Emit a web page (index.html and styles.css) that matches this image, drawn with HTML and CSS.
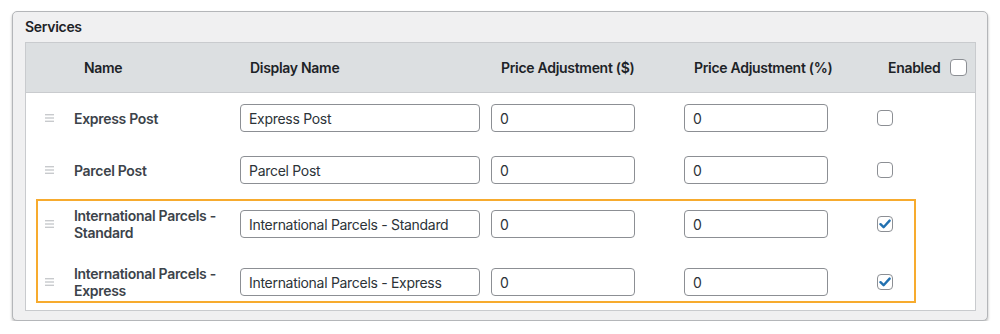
FILE: index.html
```html
<!DOCTYPE html>
<html>

<head>
<link rel="stylesheet" href="styles.css">
</head>

<body>
<div class="panel">

<div class="title">Services</div>

<div class="services">

<div class="row head">
<div></div>
<div class="th">Name</div>
<div class="th">Display Name</div>
<div class="th">Price Adjustment ($)</div>
<div class="th">Price Adjustment (%)</div>
<div class="th enabled">Enabled <span class="check big"></span></div>
</div>

<div class="tbody">

<div class="row">
<span class="handle"><svg width="9" height="8" viewBox="0 0 9 8"><rect y="0" width="9" height="1.4"/><rect y="3.3" width="9" height="1.4"/><rect y="6.6" width="9" height="1.4"/></svg></span>
<div class="name">Express Post</div>
<input class="text wide" value="Express Post">
<input class="text" value="0">
<input class="text" value="0">
<span class="check"></span>
</div>

<div class="row">
<span class="handle"><svg width="9" height="8" viewBox="0 0 9 8"><rect y="0" width="9" height="1.4"/><rect y="3.3" width="9" height="1.4"/><rect y="6.6" width="9" height="1.4"/></svg></span>
<div class="name">Parcel Post</div>
<input class="text wide" value="Parcel Post">
<input class="text" value="0">
<input class="text" value="0">
<span class="check"></span>
</div>

<div class="highlight">

<div class="row">
<span class="handle"><svg width="9" height="8" viewBox="0 0 9 8"><rect y="0" width="9" height="1.4"/><rect y="3.3" width="9" height="1.4"/><rect y="6.6" width="9" height="1.4"/></svg></span>
<div class="name">International Parcels - Standard</div>
<input class="text wide" value="International Parcels - Standard">
<input class="text" value="0">
<input class="text" value="0">
<span class="check on"><svg width="12" height="10" viewBox="0 0 12 10"><path d="M1.5 5.2 L4.6 8.2 L10.6 1.6" fill="none" stroke="#2271b1" stroke-width="2.4" stroke-linecap="round" stroke-linejoin="round"/></svg></span>
</div>

<div class="row">
<span class="handle"><svg width="9" height="8" viewBox="0 0 9 8"><rect y="0" width="9" height="1.4"/><rect y="3.3" width="9" height="1.4"/><rect y="6.6" width="9" height="1.4"/></svg></span>
<div class="name">International Parcels - Express</div>
<input class="text wide" value="International Parcels - Express">
<input class="text" value="0">
<input class="text" value="0">
<span class="check on"><svg width="12" height="10" viewBox="0 0 12 10"><path d="M1.5 5.2 L4.6 8.2 L10.6 1.6" fill="none" stroke="#2271b1" stroke-width="2.4" stroke-linecap="round" stroke-linejoin="round"/></svg></span>
</div>

</div>

</div>

</div>

</div>
</body>
</html>
```

FILE: styles.css
```css
body {
    margin: 0;
    background: #fff;
    font-family: Inter, "Noto Sans", sans-serif;
    font-size: 14px;
    letter-spacing: -0.3px;
    color: #3c434a;
}

.panel {
    box-sizing: border-box;
    width: 976px;
    margin: 11px 0 0 12px;
    padding: 0 11px 9px 12px;

    background: #f0f0f1;
    border: 1px solid #b4b6b9;
    border-radius: 5px;
    box-shadow: 0 2px 3px rgba(0, 0, 0, 0.28);
}

.title {
    padding: 5px 0;
    line-height: 20px;
    font-weight: 600;
    color: #1d2327;
}

.services {
    border: 1px solid #c9cbce;
    background: #fff;
}

.row {
    display: grid;
    grid-template-columns: 36px 166px 251px 193px 193px 1fr;
    grid-template-rows: 28px;
    align-items: center;
    height: 28px;
    padding-left: 12px;
}

.head {
    grid-template-rows: 48px;
    height: 48px;
    padding-bottom: 1px;
    background: #dcdfe1;
    border-bottom: 1px solid #c9cbce;
}

.th {
    padding-left: 10px;
    font-weight: 600;
    color: #1d2327;
}

.enabled {
    display: flex;
    align-items: center;
    gap: 10px;
    padding-left: 11px;
}

.tbody {
    padding: 11px 0 7px;
}

.tbody > .row + .row {
    margin-top: 24px;
}

.highlight {
    width: 880px;
    box-sizing: border-box;
    margin: 15px 0 0 10px;
    padding: 9px 0 5px;
    border: 2px solid #f7ab2e;
}

.highlight .row {
    padding-left: 0;
}

.highlight .row + .row {
    margin-top: 30px;
}

.handle {
    margin-left: 7px;
    fill: #c8cacd;
    line-height: 0;
}

.name {
    font-weight: 600;
    line-height: 17px;
    padding-right: 14px;
}

.text {
    box-sizing: border-box;
    width: 144px;
    height: 28px;
    padding: 0 8px;

    font-family: Inter, "Noto Sans", sans-serif;
    font-size: 14px;
    letter-spacing: -0.3px;
    color: #2c3338;

    border: 1px solid #8c8f94;
    border-radius: 4px;
    background: #fff;
}

.text.wide {
    width: 240px;
}

.check {
    box-sizing: border-box;
    display: inline-flex;
    align-items: center;
    justify-content: center;
    width: 16px;
    height: 16px;
    border: 1px solid #8c8f94;
    border-radius: 4px;
    background: #fff;
}

.check.big {
    width: 17px;
    height: 17px;
}
```
